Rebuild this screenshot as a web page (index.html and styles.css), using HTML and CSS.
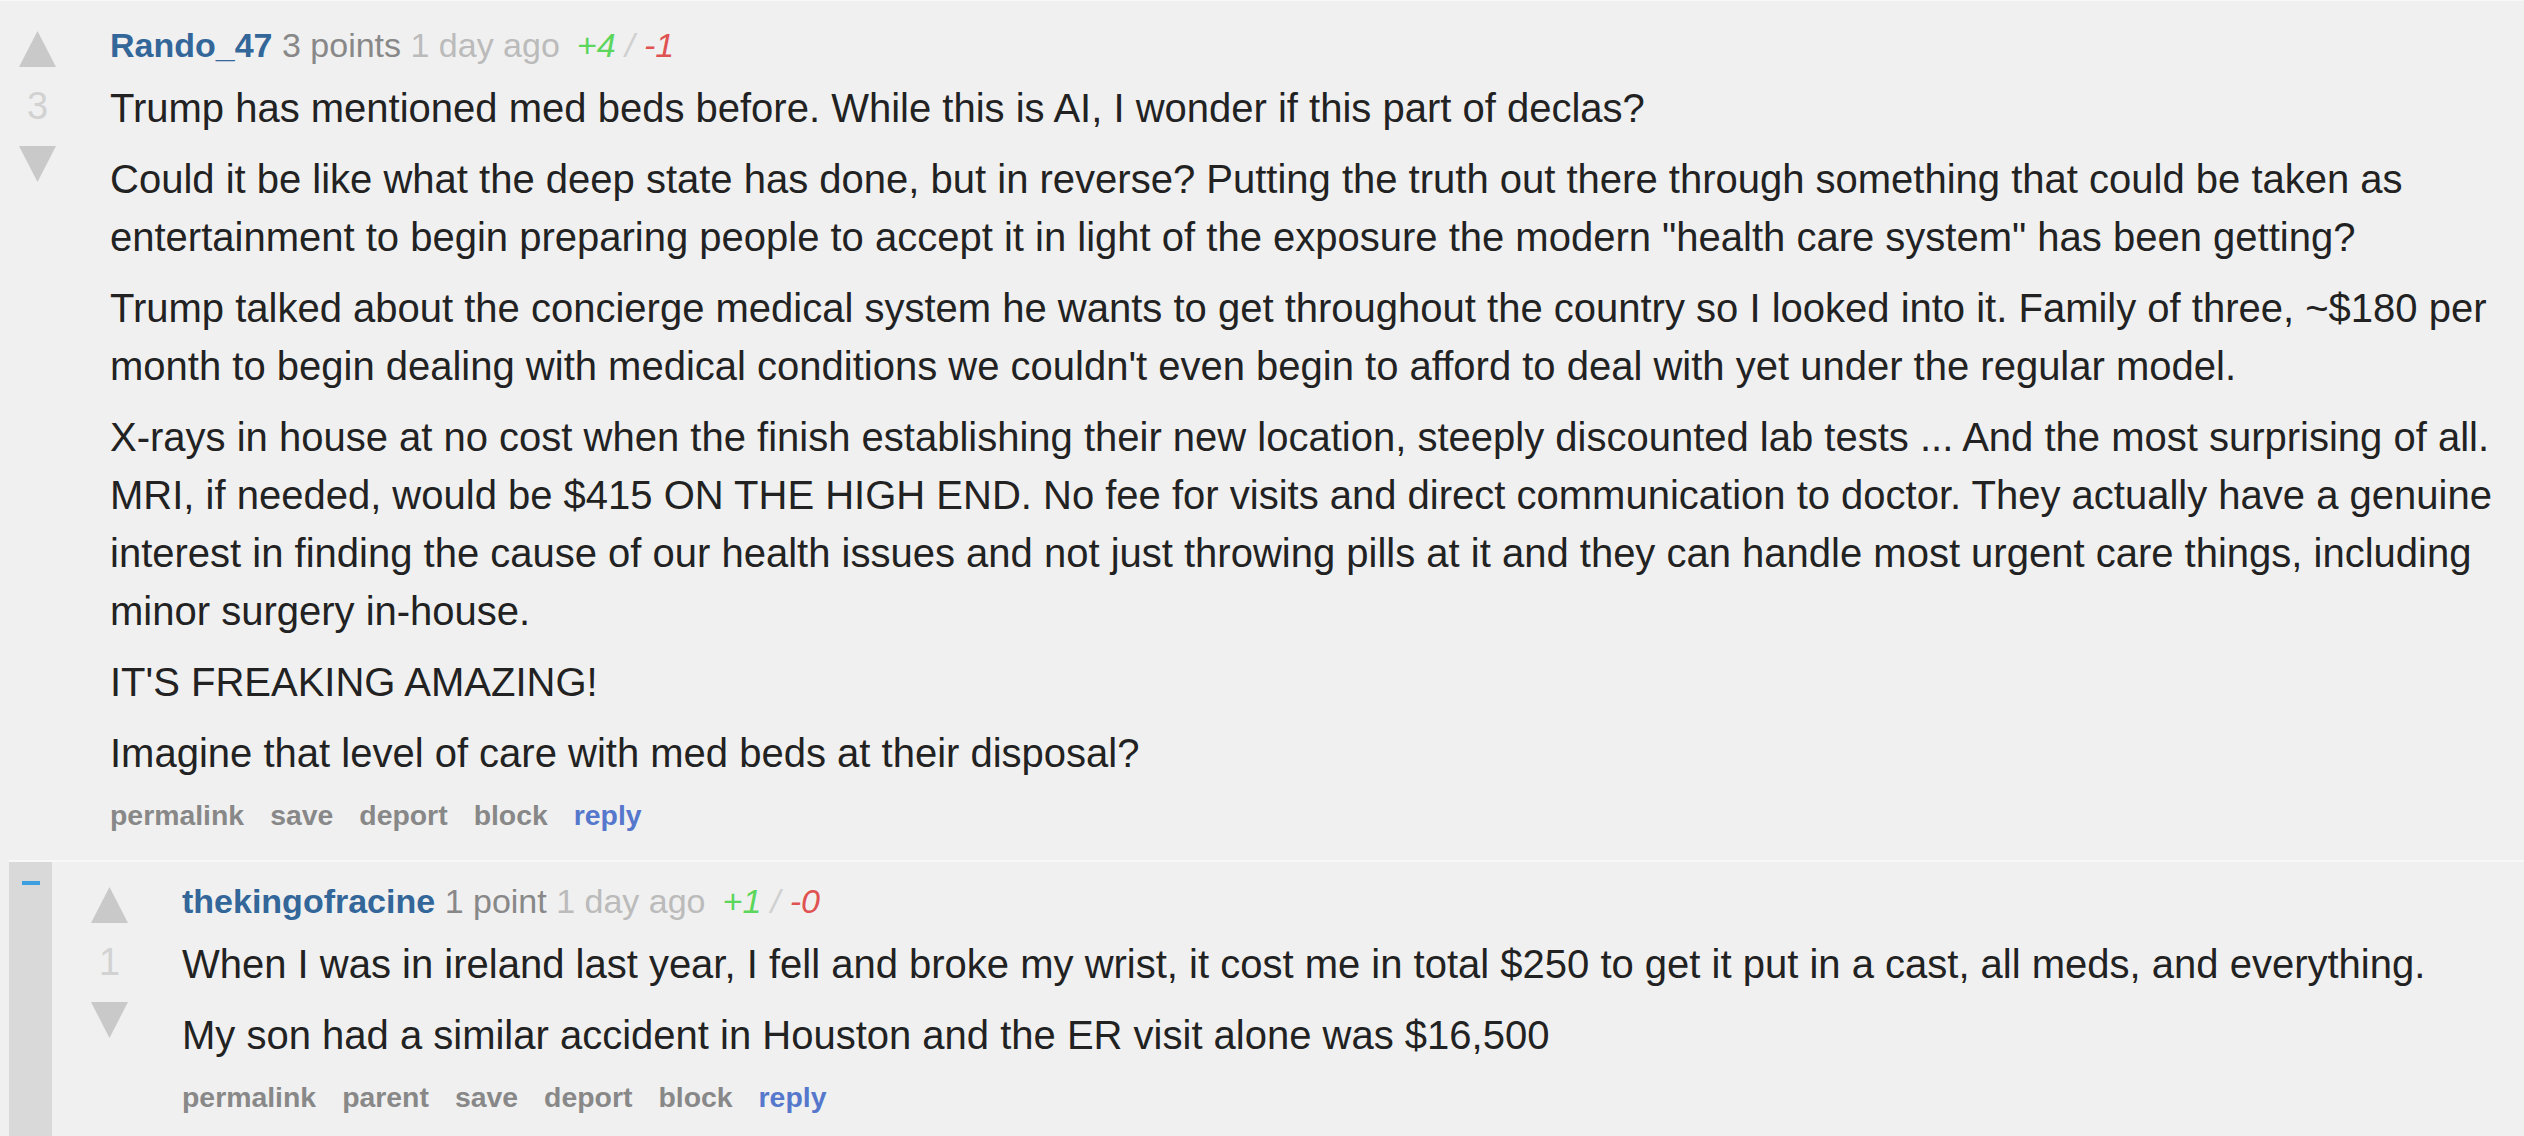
FILE: index.html
```html
<!DOCTYPE html>
<html lang="en">
<head>
<meta charset="utf-8">
<title>Comments</title>
<link rel="stylesheet" href="styles.css">
</head>
<body>
<div class="page">
  <div class="comment">
    <div class="vote">
      <svg class="arrow" viewBox="0 0 37 36" width="37" height="36"><polygon points="18.5,0 37,36 0,36"/></svg>
      <div class="score">3</div>
      <svg class="arrow" viewBox="0 0 37 36" width="37" height="36"><polygon points="0,0 37,0 18.5,36"/></svg>
    </div>
    <div class="main">
      <div class="meta"><a class="author" href="#">Rando_47</a> <span class="points">3 points</span> <span class="time">1 day ago</span><span class="tally"><span class="plus">+4</span> <span class="sep">/</span> <span class="minus-v">-1</span></span></div>
      <div class="text">
        <p>Trump has mentioned med beds before. While this is AI, I wonder if this part of declas?</p>
        <p>Could it be like what the deep state has done, but in reverse? Putting the truth out there through something that could be taken as entertainment to begin preparing people to accept it in light of the exposure the modern "health care system" has been getting?</p>
        <p>Trump talked about the concierge medical system he wants to get throughout the country so I looked into it. Family of three, ~$180 per month to begin dealing with medical conditions we couldn't even begin to afford to deal with yet under the regular model.</p>
        <p>X-rays in house at no cost when the finish establishing their new location, steeply discounted lab tests ... And the most surprising of all. MRI, if needed, would be $415 ON THE HIGH END. No fee for visits and direct communication to doctor. They actually have a genuine interest in finding the cause of our health issues and not just throwing pills at it and they can handle most urgent care things, including minor surgery in-house.</p>
        <p>IT'S FREAKING AMAZING!</p>
        <p>Imagine that level of care with med beds at their disposal?</p>
      </div>
      <ul class="actions">
        <li><a href="#">permalink</a></li>
        <li><a href="#">save</a></li>
        <li><a href="#">deport</a></li>
        <li><a href="#">block</a></li>
        <li><a class="reply" href="#">reply</a></li>
      </ul>
    </div>
  </div>
  <div class="child">
    <div class="collapse"><span class="collapse-mark"></span></div>
    <div class="comment nested">
      <div class="vote">
        <svg class="arrow" viewBox="0 0 37 36" width="37" height="36"><polygon points="18.5,0 37,36 0,36"/></svg>
        <div class="score">1</div>
        <svg class="arrow" viewBox="0 0 37 36" width="37" height="36"><polygon points="0,0 37,0 18.5,36"/></svg>
      </div>
      <div class="main">
        <div class="meta"><a class="author" href="#">thekingofracine</a> <span class="points">1 point</span> <span class="time">1 day ago</span><span class="tally"><span class="plus">+1</span> <span class="sep">/</span> <span class="minus-v">-0</span></span></div>
        <div class="text">
          <p>When I was in ireland last year, I fell and broke my wrist, it cost me in total $250 to get it put in a cast, all meds, and everything.</p>
          <p>My son had a similar accident in Houston and the ER visit alone was $16,500</p>
        </div>
        <ul class="actions">
          <li><a href="#">permalink</a></li>
          <li><a href="#">parent</a></li>
          <li><a href="#">save</a></li>
          <li><a href="#">deport</a></li>
          <li><a href="#">block</a></li>
          <li><a class="reply" href="#">reply</a></li>
        </ul>
      </div>
    </div>
  </div>
</div>
</body>
</html>
```

FILE: styles.css
```css
html, body {
  margin: 0;
  padding: 0;
  background: #f0f0f0;
}

body {
  font-family: "Liberation Sans", Arial, Helvetica, sans-serif;
  color: #222222;
  overflow: hidden;
}

.page {
  border-top: 1px solid #f8f8f8;
  padding-top: 5px;
}

.comment {
  display: flex;
  align-items: flex-start;
  padding: 17px 0 25px 0;
}

.vote {
  flex: none;
  width: 75px;
  margin-right: 35px;
  margin-top: 8px;
  display: flex;
  flex-direction: column;
  align-items: center;
}

.arrow {
  display: block;
  fill: #c9c9c9;
}

.score {
  font-size: 38px;
  line-height: 60px;
  color: #d2d2d2;
  margin: 9px 0 10px;
}

.main {
  flex: 1;
  min-width: 0;
}

.meta {
  font-size: 34px;
  line-height: 44px;
  margin-bottom: 12px;
  white-space: nowrap;
}

.author {
  color: #336699;
  font-weight: bold;
  text-decoration: none;
}

.points {
  color: #888888;
}

.time {
  color: #bbbbbb;
}

.tally {
  margin-left: 17px;
  font-style: italic;
}

.plus {
  color: #5cd65c;
}

.sep {
  color: #d0d0d0;
}

.minus-v {
  color: #e05252;
}

.text p {
  margin: 0 0 13px 0;
  font-size: 40px;
  line-height: 58px;
}

.actions {
  list-style: none;
  margin: 0;
  padding: 0;
  display: flex;
  gap: 26px;
  font-size: 28.4px;
  line-height: 40px;
  font-weight: bold;
}

.actions a {
  color: #888888;
  text-decoration: none;
}

.actions a.reply {
  color: #5577cc;
}

.child {
  margin-left: 9px;
  border-top: 2px solid #f8f8f8;
  display: flex;
  align-items: stretch;
}

.collapse {
  flex: none;
  width: 43px;
  background: #d9d9d9;
  display: flex;
  justify-content: center;
  align-items: flex-start;
}

.collapse-mark {
  display: block;
  width: 18px;
  height: 4px;
  margin-top: 19px;
  background: #3d9fe0;
}

.nested {
  flex: 1;
  margin-left: 20px;
  min-width: 0;
}
```
